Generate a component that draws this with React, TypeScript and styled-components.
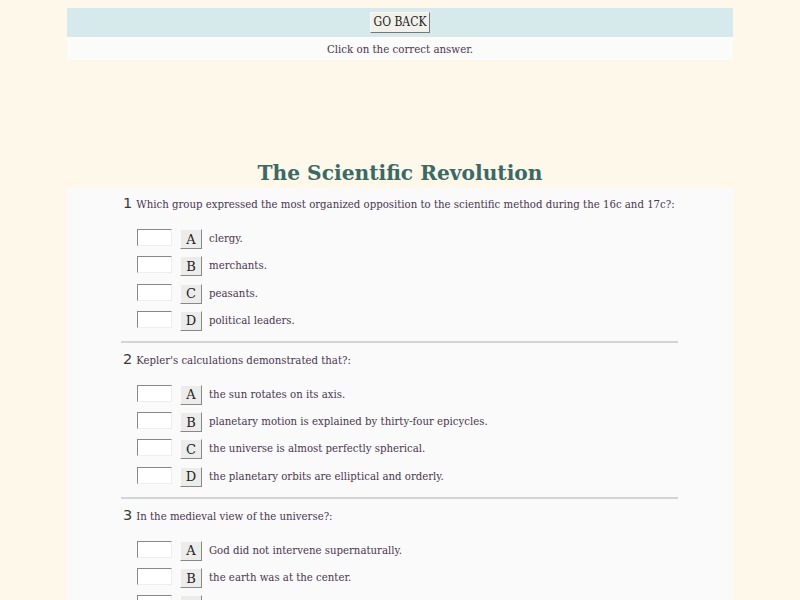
import React from "react";
import styled, { createGlobalStyle } from "styled-components";

const Global = createGlobalStyle`
  html, body { background: #fdf8e9; }
  body { margin: 8px; font-family: "DejaVu Serif", serif; color: #4a3550; }
`;

const Page = styled.div`
  width: 666px;
  margin: 0 auto;
`;

const TopBar = styled.div`
  height: 29px;
  background: #d6eaec;
  display: flex;
  align-items: center;
  justify-content: center;
`;

const BackButton = styled.button`
  font-family: "DejaVu Serif Condensed", "DejaVu Serif", serif;
  font-stretch: condensed;
  font-size: 12px;
  color: #222;
  background: #f2f0ea;
  border: 1px solid;
  border-color: #f8f8f8 #777 #777 #f8f8f8;
  padding: 2px 3px;
  height: 21px;
  line-height: 15px;
`;

const Instruction = styled.div`
  height: 23px;
  background: #fbfbfa;
  display: flex;
  align-items: center;
  justify-content: center;
  font-size: 11.4px;
  font-stretch: condensed;
  font-family: "DejaVu Serif Condensed", "DejaVu Serif", serif;
`;

const Title = styled.h1`
  margin: 0;
  padding-top: 99px;
  height: 29px;
  text-align: center;
  font-family: "DejaVu Serif", serif;
  font-weight: bold;
  font-size: 20.2px;
  line-height: 29px;
  color: #3b6966;
`;

const Content = styled.div`
  background: #fafafa;
  padding: 7px 55px 0 56px;
  height: 420px;
`;

const Question = styled.div`
  display: flex;
  flex-direction: column;
`;

const Prompt = styled.div`
  display: flex;
  align-items: baseline;
  gap: 4px;
  height: 20px;
`;

const Num = styled.span`
  font-family: "DejaVu Sans", sans-serif;
  font-size: 14.5px;
  color: #3a3a3a;
`;

const PromptText = styled.span`
  font-size: 11.3px;
  font-family: "DejaVu Serif Condensed", "DejaVu Serif", serif;
  font-stretch: condensed;
`;

const Options = styled.div`
  display: flex;
  flex-direction: column;
  gap: 7.3px;
  padding: 14px 0 0 14px;
`;

const Row = styled.div`
  display: flex;
  align-items: flex-start;
  height: 20px;
`;

const Box = styled.input`
  width: 35px;
  height: 17px;
  box-sizing: border-box;
  margin: 0 8px 0 0;
  padding: 0;
  background: #fff;
  border: 1px solid;
  border-color: #888 #eee #eee #888;
`;

const Letter = styled.button`
  width: 22px;
  height: 20px;
  box-sizing: border-box;
  padding: 0;
  margin: 0 7px 0 0;
  font-family: "DejaVu Serif", serif;
  font-size: 13px;
  color: #222;
  background: #ececea;
  border: 1px solid;
  border-color: #fafafa #888 #888 #fafafa;
`;

const OptText = styled.span`
  font-size: 11.3px;
  line-height: 20px;
  font-family: "DejaVu Serif Condensed", "DejaVu Serif", serif;
  font-stretch: condensed;
`;

const Rule = styled.hr`
  margin: 10px 0 0 -2px;
  width: 557px;
  border: 0;
  height: 2px;
  background: #d4d4d4;
`;

const Spacer = styled.div`
  height: 8px;
`;

const questions = [
  {
    q: "Which group expressed the most organized opposition to the scientific method during the 16c and 17c?:",
    a: ["clergy.", "merchants.", "peasants.", "political leaders."],
  },
  {
    q: "Kepler's calculations demonstrated that?:",
    a: [
      "the sun rotates on its axis.",
      "planetary motion is explained by thirty-four epicycles.",
      "the universe is almost perfectly spherical.",
      "the planetary orbits are elliptical and orderly.",
    ],
  },
  {
    q: "In the medieval view of the universe?:",
    a: [
      "God did not intervene supernaturally.",
      "the earth was at the center.",
      "the universe was infinite.",
      "the planets moved in elliptical orbits.",
    ],
  },
];

export default function App() {
  return (
    <>
      <Global />
      <Page>
        <TopBar>
          <BackButton>GO BACK</BackButton>
        </TopBar>
        <Instruction>Click on the correct answer.</Instruction>
        <Title>The Scientific Revolution</Title>
        <Content>
          {questions.map((item, i) => (
            <Question key={i}>
              <Prompt>
                <Num>{i + 1}</Num>
                <PromptText>{item.q}</PromptText>
              </Prompt>
              <Options>
                {item.a.map((t, j) => (
                  <Row key={j}>
                    <Box type="text" />
                    <Letter>{"ABCD"[j]}</Letter>
                    <OptText>{t}</OptText>
                  </Row>
                ))}
              </Options>
              {i < questions.length - 1 ? (
                <>
                  <Rule />
                  <Spacer />
                </>
              ) : null}
            </Question>
          ))}
        </Content>
      </Page>
    </>
  );
}
